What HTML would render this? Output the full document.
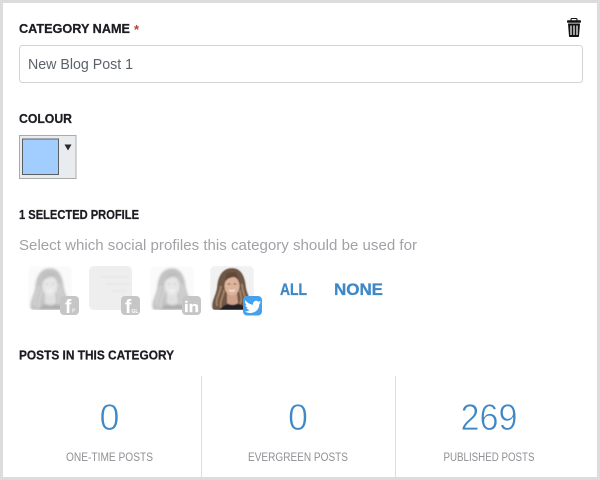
<!DOCTYPE html>
<html><head><meta charset="utf-8"><style>
html,body{margin:0;padding:0;background:#fff}
svg{display:block}
text{font-family:"Liberation Sans",sans-serif}
.h{font-weight:bold;fill:#1c1c22;stroke:#1c1c22;stroke-width:.25px;font-size:13px}
.l{fill:#8f9094;font-size:11.5px;text-anchor:middle}
.n{fill:#3f88c5;font-size:37px;text-anchor:middle;stroke:#fff;stroke-width:.7px}
.b{font-weight:bold;fill:#3f88c5;stroke:#3f88c5;stroke-width:.3px;font-size:16.5px}
</style></head><body>
<svg width="600" height="480" viewBox="0 0 600 480" xmlns="http://www.w3.org/2000/svg">
<defs>
<filter id="bl" x="-20%" y="-20%" width="140%" height="140%"><feGaussianBlur stdDeviation="0.6"/></filter>
<filter id="gr" x="-20%" y="-20%" width="140%" height="140%"><feColorMatrix type="saturate" values="0"/><feGaussianBlur stdDeviation="1"/></filter>
<clipPath id="av"><rect x="0" y="0" width="44" height="44" rx="5"/></clipPath>
<g id="p">
<rect width="44" height="44" fill="#f1f1f1"/>
<path d="M3 44C0 36 6 30 7 21C8 8 14 2 22 2C31 2 35 10 36 21C37 29 43 35 40 44Z" fill="#6f5744"/>
<path d="M9 44C12 40 15 39 18 38H29C32 39 36 41 38 44Z" fill="#232327"/>
<path d="M7 40C5 33 10 28 11 20M35 39C37 32 32 26 32 18M11 42C9 35 14 30 14 24M30 38C33 33 30 29 30 24" stroke="#a5866a" stroke-width="1.800" fill="none"/>
<path d="M17 27L27 27L28 37C25 39.500 20 39.500 17 37Z" fill="#cfa08a"/>
<ellipse cx="22" cy="20" rx="7.500" ry="9.500" fill="#deb49b"/>
<path d="M14 17C17 12 24 9 29 13L26 6L17 7Z" fill="#5f4938"/>
<path d="M19 24Q22 26 25 24" stroke="#f4eeea" stroke-width="1.100" fill="none"/>
<path d="M17.500 18h3M23.500 18h3" stroke="#6a5246" stroke-width=".9"/>
</g>
</defs>

<rect width="600" height="480" fill="#dcdcdc"/>
<rect x="3" y="3" width="594" height="474" fill="#fff"/>

<text x="19" y="33" class="h" textLength="111" lengthAdjust="spacingAndGlyphs">CATEGORY NAME</text>
<text x="134" y="34" font-size="13" font-weight="bold" fill="#b9402c">*</text>

<g>
<rect x="567" y="20.300" width="14" height="2.400" rx="0.800" fill="#111"/>
<rect x="571" y="18.500" width="6" height="2.500" rx="1" fill="none" stroke="#111" stroke-width="1.100"/>
<path d="M568 23.500H580L579 36.200Q578.900 37 578 37H570Q569.100 37 569 36.200Z" fill="#111"/>
<path d="M571 25.500V35M574 25.500V35M577 25.500V35" stroke="#fff" stroke-width="1.200"/>
</g>

<rect x="19.500" y="45.500" width="563" height="37" rx="3" fill="#fff" stroke="#d4d4d4"/>
<text x="28" y="69" font-size="15" fill="#5c616c" textLength="105" lengthAdjust="spacingAndGlyphs">New Blog Post 1</text>

<text x="19" y="123" class="h" textLength="53" lengthAdjust="spacingAndGlyphs">COLOUR</text>
<rect x="19.500" y="135.500" width="56.500" height="43" fill="#e9ecef" stroke="#a9abab"/>
<rect x="22.500" y="139" width="36" height="35.500" fill="#a1cdff" stroke="#5a5f66"/>
<path d="M64.500 144.500H71.500L68 150.500Z" fill="#2a2a2e"/>

<text x="19" y="219" class="h" style="font-size:12.5px" textLength="120" lengthAdjust="spacingAndGlyphs">1 SELECTED PROFILE</text>
<text x="19" y="250" font-size="15" fill="#a0a2a6" textLength="398" lengthAdjust="spacingAndGlyphs">Select which social profiles this category should be used for</text>

<g transform="translate(28,266)" clip-path="url(#av)"><g filter="url(#gr)" opacity=".36"><use href="#p"/></g></g>
<rect x="89" y="266" width="43" height="44" rx="5" fill="#eeeeee"/>
<g fill="#e8e8e8" filter="url(#bl)"><rect x="101" y="276" width="28" height="2"/><rect x="106" y="283" width="24" height="2"/><rect x="112" y="290" width="14" height="2"/></g>
<g transform="translate(150,266)" clip-path="url(#av)"><g filter="url(#gr)" opacity=".36"><use href="#p"/></g></g>
<g transform="translate(210,266)" clip-path="url(#av)"><g filter="url(#bl)"><use href="#p"/></g></g>

<g fill="#c6c6c6">
<rect x="60" y="296" width="19" height="19" rx="4"/>
<rect x="121" y="296" width="19" height="19" rx="4"/>
<rect x="182" y="296" width="19" height="19" rx="4"/>
</g>
<rect x="243" y="296" width="19" height="19.500" rx="4" fill="#45a1ee"/>
<text x="65" y="313" font-size="19" font-weight="bold" fill="#fff">f</text>
<text x="72" y="312.500" font-size="5" fill="#fff">P</text>
<text x="125" y="313" font-size="19" font-weight="bold" fill="#fff">f</text>
<text x="131.500" y="312.800" font-size="5" font-weight="bold" fill="#fff">GL</text>
<text x="184" y="312" font-size="15" font-weight="bold" fill="#fff" stroke="#fff" stroke-width=".3" textLength="15" lengthAdjust="spacingAndGlyphs">in</text>
<path d="M245 300C248 303.500 250.500 304.500 253 304.700C252.500 301.500 256.200 299.500 258.300 301.700C259 301.600 259.800 301.300 260.600 300.900C260.300 301.800 259.800 302.400 259.200 302.900C259.900 302.800 260.500 302.600 261 302.300C260.500 303.100 259.900 303.700 259.300 304.100C259.300 309.800 254.500 313.500 249.500 313C247.800 312.900 246.200 312.300 245 311.400C246.600 311.500 248.300 311 249.500 310C248.200 309.900 247 309 246.600 307.900C247.100 308 247.500 308 248 307.800C246.500 307.500 245.500 306.200 245.500 304.700C246 305 246.400 305.100 246.900 305.200C245.300 304.200 244.700 301.800 245 300Z" fill="#fff"/>

<text x="280" y="295" class="b" textLength="27" lengthAdjust="spacingAndGlyphs">ALL</text>
<text x="334" y="295" class="b" textLength="49" lengthAdjust="spacingAndGlyphs">NONE</text>

<text x="19" y="359.500" class="h" textLength="155" lengthAdjust="spacingAndGlyphs">POSTS IN THIS CATEGORY</text>

<rect x="201" y="376" width="1" height="101" fill="#dedede"/>
<rect x="395" y="376" width="1" height="101" fill="#dedede"/>

<text x="109.500" y="430" class="n" textLength="20" lengthAdjust="spacingAndGlyphs">0</text>
<text x="298" y="430" class="n" textLength="20" lengthAdjust="spacingAndGlyphs">0</text>
<text x="489" y="430" class="n" textLength="57" lengthAdjust="spacingAndGlyphs">269</text>

<text x="109.500" y="461" class="l" textLength="87" lengthAdjust="spacingAndGlyphs">ONE-TIME POSTS</text>
<text x="298" y="461" class="l" textLength="100" lengthAdjust="spacingAndGlyphs">EVERGREEN POSTS</text>
<text x="489" y="461" class="l" textLength="91" lengthAdjust="spacingAndGlyphs">PUBLISHED POSTS</text>
</svg>
</body></html>
